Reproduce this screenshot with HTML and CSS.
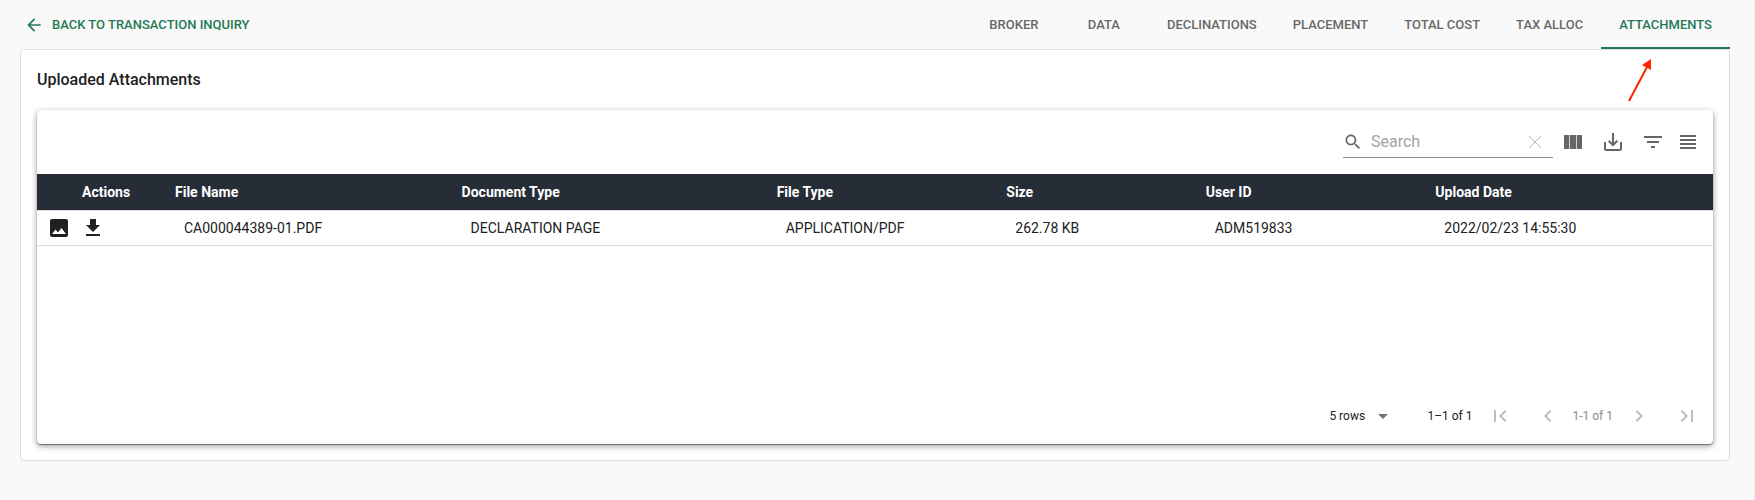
FILE: index.html
```html
<!DOCTYPE html>
<html lang="en">
<head>
<meta charset="utf-8">
<title>Uploaded Attachments</title>
<link rel="stylesheet" href="styles.css">
</head>
<body>
<header class="topbar">
  <a class="back" href="#">
    <svg class="back-icon" viewBox="0 0 24 24"><path d="M20 11H7.83l5.59-5.59L12 4l-8 8 8 8 1.41-1.41L7.83 13H20v-2z"/></svg>
    <span>BACK TO TRANSACTION INQUIRY</span>
  </a>
  <nav class="tabs">
    <a class="tab" href="#">BROKER</a>
    <a class="tab" href="#">DATA</a>
    <a class="tab" href="#">DECLINATIONS</a>
    <a class="tab" href="#">PLACEMENT</a>
    <a class="tab" href="#">TOTAL COST</a>
    <a class="tab" href="#">TAX ALLOC</a>
    <a class="tab tab-active" href="#">ATTACHMENTS</a>
  </nav>
</header>
<main class="panel">
  <svg class="pointer" viewBox="0 0 26 46"><path d="M3 43L21 9" stroke="#ff2600" stroke-width="2" fill="none"/><path d="M25 1L16 7L25 12Z" fill="#ff2600"/></svg>
  <h1 class="title">Uploaded Attachments</h1>
  <section class="card">
    <div class="toolbar">
      <div class="search">
        <svg class="search-icon" viewBox="0 0 24 24"><path d="M15.5 14h-.79l-.28-.27C15.41 12.59 16 11.11 16 9.5 16 5.91 13.09 3 9.5 3S3 5.91 3 9.5 5.91 16 9.5 16c1.61 0 3.09-.59 4.23-1.57l.27.28v.79l5 4.99L20.49 19l-4.99-5zm-6 0C7.01 14 5 11.99 5 9.5S7.01 5 9.5 5 14 7.01 14 9.5 11.99 14 9.5 14z"/></svg>
        <input class="search-input" type="text" placeholder="Search" aria-label="Search">
        <button class="clear" type="button" aria-label="Clear search"><svg viewBox="0 0 14 14"><path d="M1 1L13 13M13 1L1 13"/></svg></button>
      </div>
      <div class="tools">
        <button class="tool" type="button" aria-label="Show columns"><svg viewBox="0 0 24 24"><path d="M3 5h5.300v14H3zM9 5h6v14H9zM15.700 5H21v14h-5.300z"/></svg></button>
        <button class="tool" type="button" aria-label="Export"><svg viewBox="0 0 24 24"><path d="M19 12v7H5v-7H3v7c0 1.100.9 2 2 2h14c1.100 0 2-.9 2-2v-7h-2zm-6 .67l2.590-2.580L17 11.500l-5 5-5-5 1.410-1.410L11 12.670V3h2z"/></svg></button>
        <button class="tool" type="button" aria-label="Filter"><svg viewBox="0 0 24 24"><path d="M10 18h4v-2h-4v2zM3 6v2h18V6H3zm3 7h12v-2H6v2z"/></svg></button>
        <button class="tool tool-narrow" type="button" aria-label="Density"><svg viewBox="0 0 24 24"><path d="M4 15h16v-2H4v2zm0 4h16v-2H4v2zm0-8h16V9H4v2zm0-6v2h16V5H4z"/></svg></button>
      </div>
    </div>
    <table class="grid">
      <colgroup>
        <col class="c-actions"><col class="c-name"><col class="c-doc"><col class="c-type"><col class="c-size"><col class="c-user"><col>
      </colgroup>
      <thead>
        <tr><th class="actions-head">Actions</th><th>File Name</th><th>Document Type</th><th>File Type</th><th>Size</th><th>User ID</th><th>Upload Date</th></tr>
      </thead>
      <tbody>
        <tr>
          <td class="actions">
            <div class="action-list">
              <button class="action" type="button" aria-label="Preview"><svg viewBox="0 0 24 24"><path d="M21 19V5c0-1.100-.9-2-2-2H5c-1.100 0-2 .9-2 2v14c0 1.100.9 2 2 2h14c1.100 0 2-.9 2-2zM8.500 13.500l2.500 3.010L14.500 12l4.500 6H5l3.500-4.500z"/></svg></button>
              <button class="action" type="button" aria-label="Download"><svg viewBox="0 0 24 24"><path d="M19 9h-4V3H9v6H5l7 7 7-7zM5 18v2h14v-2H5z"/></svg></button>
            </div>
          </td>
          <td>CA000044389-01.PDF</td><td>DECLARATION PAGE</td><td>APPLICATION/PDF</td><td>262.78 KB</td><td>ADM519833</td><td>2022/02/23 14:55:30</td>
        </tr>
      </tbody>
    </table>
    <footer class="pager">
      <div class="rows">
        <select class="rows-select" aria-label="Rows per page"><option>5 rows</option></select>
        <svg class="caret" viewBox="0 0 24 24"><path d="M7 10l5 5 5-5z"/></svg>
      </div>
      <span class="range">1–1 of 1</span>
      <button class="page" type="button" aria-label="First page" disabled><svg viewBox="0 0 24 24"><path d="M18.410 16.590L13.820 12l4.590-4.590L17 6l-6 6 6 6zM6 6h2v12H6z"/></svg></button>
      <button class="page" type="button" aria-label="Previous page" disabled><svg viewBox="0 0 24 24"><path d="M15.410 7.410L14 6l-6 6 6 6 1.410-1.410L10.830 12z"/></svg></button>
      <span class="range-muted">1-1 of 1</span>
      <button class="page" type="button" aria-label="Next page" disabled><svg viewBox="0 0 24 24"><path d="M10 6L8.590 7.410 13.170 12l-4.580 4.590L10 18l6-6z"/></svg></button>
      <button class="page" type="button" aria-label="Last page" disabled><svg viewBox="0 0 24 24"><path d="M5.590 7.410L10.180 12l-4.590 4.590L7 18l6-6-6-6zM16 6h2v12h-2z"/></svg></button>
    </footer>
  </section>
</main>
</body>
</html>
```
FILE: styles.css
```css
* { box-sizing: border-box; }
html { background: #f9f9f9; }
body {
  margin: 0;
  min-height: 100vh;
  padding: 0 24px 0 20px;
  border-right: 1px solid #ececec;
  font-family: Roboto, "Liberation Sans", sans-serif;
  font-size: 14px;
  color: #212121;
}
a { text-decoration: none; }
button { display: flex; align-items: center; justify-content: center; padding: 0; border: 0; background: none; }
svg { display: block; fill: currentColor; }

.topbar { display: flex; justify-content: space-between; height: 49px; font-size: 13px; }
.back { display: flex; align-items: center; gap: 8px; padding-left: 4px; color: #257a53; font-weight: 500; }
.back-icon { width: 20px; height: 20px; }
.tabs { display: flex; }
.tab {
  display: flex; align-items: center; justify-content: center;
  min-width: 90px; padding: 2px 18px 0; border-bottom: 2px solid transparent;
  font-weight: 500; color: #686868;
}
.tab-active { color: #257a53; border-bottom-color: #257a53; }

.panel { position: relative; padding: 16px; border: 1px solid #dedede; border-radius: 4px; background: #fff; }
.pointer { position: absolute; top: 8px; right: 77px; width: 26px; height: 46px; }
.title { margin: 0 0 16px; font-size: 16px; line-height: 28px; font-weight: 500; }

.card {
  display: flex; flex-direction: column; min-height: 334px; border-radius: 4px; background: #fff;
  box-shadow: 0 1px 1px rgba(0,0,0,.4), 0 2px 6px rgba(0,0,0,.4);
}
.toolbar { display: flex; align-items: center; justify-content: flex-end; height: 64px; padding-right: 10px; color: #666; }
.search { display: flex; align-items: center; width: 210px; height: 32px; border-bottom: 1px solid #8c8c8c; }
.search-icon { width: 20px; height: 20px; }
.search-input { flex: 1; min-width: 0; padding: 0 0 0 8px; border: 0; outline: 0; background: none; font: inherit; font-size: 16px; }
.search-input::placeholder { color: #a3a3a3; opacity: 1; }
.clear { width: 36px; height: 30px; }
.clear svg { width: 14px; height: 14px; stroke: #b3b3b3; fill: none; }
.tools { display: flex; }
.tool { width: 40px; height: 40px; color: #666; }
.tool svg { width: 24px; height: 24px; }
.tool-narrow { width: 30px; }

.grid { width: 100%; table-layout: fixed; border-collapse: collapse; }
.c-actions { width: 129px; }
.c-name { width: 17.1%; }
.c-doc { width: 18.8%; }
.c-type { width: 13.7%; }
.c-size { width: 11.9%; }
.c-user { width: 13.7%; }
.grid th { height: 36px; padding: 0 9px; background: #262d37; color: #fff; text-align: left; font-weight: 700; }
.grid td { height: 35px; padding: 0 18px; border-top: 1px solid #dcdcdc; border-bottom: 1px solid #dcdcdc; }
.grid .actions-head { padding-left: 45px; }
.grid .actions { padding: 0 10px; }
.action-list { display: flex; gap: 10px; }
.action { width: 24px; height: 24px; color: #212121; }
.action svg { width: 24px; height: 24px; }

.pager { display: flex; align-items: center; margin-top: auto; height: 56px; padding-right: 2px; font-size: 12px; }
.rows { display: flex; align-items: center; margin-left: auto; }
.rows-select { width: 42px; padding: 0; border: 0; appearance: none; background: none; color: inherit; font: inherit; }
.caret { width: 24px; height: 24px; color: #757575; }
.range { padding: 0 4px 0 32px; }
.range-muted { padding-right: 2px; color: #8c8c8c; }
.page { width: 48px; height: 48px; color: #bdbdbd; }
.page svg { width: 24px; height: 24px; }
```
